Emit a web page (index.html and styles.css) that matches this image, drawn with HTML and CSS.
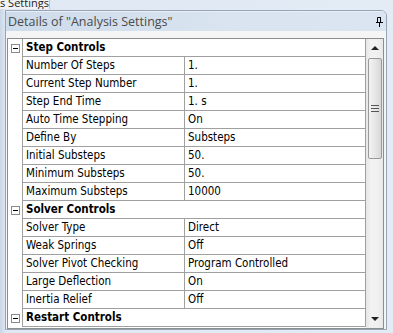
FILE: index.html
```html
<!DOCTYPE html>
<html>
<head>
	<meta charset="utf-8">
	<title>Details of "Analysis Settings"</title>
	<link rel="stylesheet" href="styles.css">
</head>
<body>
<div class="backdrop">
	<div class="tab">s Settings</div>
</div>
<div class="panel">
	<div class="titlebar">
		<span class="title">Details of "Analysis Settings"</span>
		<svg class="pin" width="7" height="10" viewBox="0 0 7 10">
			<path d="M1.5 0.5h3v5M1.5 0.5v5M0 5.5h7M3.5 5.5v4.5" fill="none" stroke="#000" stroke-width="1"/>
			<path d="M4.5 0v5.5" stroke="#000" stroke-width="1"/>
		</svg>
	</div>
	<div class="strip"></div>
	<div class="details">
		<div class="rows">
			<div class="row group"><div class="gut"><span class="toggle"></span></div><div class="cat">Step Controls</div></div>
			<div class="row"><div class="gut"></div><div class="name">Number Of Steps</div><div class="val">1.</div></div>
			<div class="row"><div class="gut"></div><div class="name">Current Step Number</div><div class="val">1.</div></div>
			<div class="row"><div class="gut"></div><div class="name">Step End Time</div><div class="val">1. s</div></div>
			<div class="row"><div class="gut"></div><div class="name">Auto Time Stepping</div><div class="val">On</div></div>
			<div class="row"><div class="gut"></div><div class="name">Define By</div><div class="val">Substeps</div></div>
			<div class="row"><div class="gut"></div><div class="name">Initial Substeps</div><div class="val">50.</div></div>
			<div class="row"><div class="gut"></div><div class="name">Minimum Substeps</div><div class="val">50.</div></div>
			<div class="row"><div class="gut"></div><div class="name">Maximum Substeps</div><div class="val">10000</div></div>
			<div class="row group"><div class="gut"><span class="toggle"></span></div><div class="cat">Solver Controls</div></div>
			<div class="row"><div class="gut"></div><div class="name">Solver Type</div><div class="val">Direct</div></div>
			<div class="row"><div class="gut"></div><div class="name">Weak Springs</div><div class="val">Off</div></div>
			<div class="row"><div class="gut"></div><div class="name">Solver Pivot Checking</div><div class="val">Program Controlled</div></div>
			<div class="row"><div class="gut"></div><div class="name">Large Deflection</div><div class="val">On</div></div>
			<div class="row"><div class="gut"></div><div class="name">Inertia Relief</div><div class="val">Off</div></div>
			<div class="row group"><div class="gut"><span class="toggle"></span></div><div class="cat">Restart Controls</div></div>
		</div>
		<div class="scrollbar">
			<div class="sbtn"><span class="arrow-up"></span></div>
			<div class="thumb"><span class="grip"></span></div>
			<div class="track"></div>
			<div class="sbtn"><span class="arrow-down"></span></div>
		</div>
	</div>
</div>
</body>
</html>
```

FILE: styles.css
```css
* {
	margin: 0;
	padding: 0;
	box-sizing: border-box;
}
body {
	width: 393px;
	height: 333px;
	overflow: hidden;
	background: linear-gradient(to right, #c9d6e6 0, #dfe8f3 6px, #e3ebf5 100%);
	font-family: "DejaVu Sans Condensed", "DejaVu Sans", sans-serif;
	font-size: 11.5px;
	color: #000;
}
.backdrop {
	height: 10px;
	overflow: hidden;
}
.tab {
	width: 50px;
	background: #f2f2f2;
	border-right: 1px solid #b8c2cf;
	font-family: "Open Sans", sans-serif;
	font-size: 11px;
	line-height: 12px;
	white-space: nowrap;
	overflow: hidden;
	margin-top: -3px;
	height: 12px;
	color: #222;
}
.panel {
	margin-left: 5px;
	width: 382px;
	height: 320px;
	border: 1px solid #97a4b5;
	border-top-right-radius: 6px;
	background: #f4f4f4;
	overflow: hidden;
}
.titlebar {
	height: 20px;
	display: flex;
	align-items: center;
	justify-content: space-between;
	padding: 0 3px 0 2px;
	background: linear-gradient(to right, #cedbea, #d9e4f0 60%, #dbe5f1);
	border-top: 1px solid #e8eef6;
}
.title {
	font-family: "Open Sans", sans-serif;
	font-size: 12.5px;
	color: #4a4a4a;
}
.pin {
	display: block;
}
.strip {
	height: 7px;
	background: #f5f5f5;
}
.details {
	margin-left: 1px;
	width: 377px;
	display: flex;
	border: 1px solid #8d8d8d;
	background: #fff;
	height: 291px;
}
.rows {
	width: 358px;
	overflow: hidden;
}
.row {
	display: grid;
	grid-template-columns: 14px 162px 182px;
	height: 18px;
}
.gut {
	display: flex;
	align-items: center;
	justify-content: center;
	padding-left: 1px;
}
.toggle {
	position: relative;
	width: 9px;
	height: 9px;
	border: 1px solid #8a8a8a;
	background: #fff;
}
.toggle::after {
	content: "";
	position: absolute;
	left: 1px;
	top: 3px;
	width: 5px;
	height: 1px;
	background: #000;
}
.name,
.val,
.cat {
	border-left: 1px solid #a0a0a0;
	border-bottom: 1px solid #a0a0a0;
	padding-left: 3px;
	line-height: 17px;
	white-space: nowrap;
	overflow: hidden;
}
.val {
	border-right: 1px solid #a0a0a0;
}
.cat {
	grid-column: span 2;
	border-right: 1px solid #a0a0a0;
	font-weight: bold;
}
.scrollbar {
	width: 17px;
	display: flex;
	flex-direction: column;
	background: linear-gradient(to right, #e6e6e6, #f2f2f2 30%, #f0f0f0 70%, #e8e8e8);
}
.sbtn {
	height: 18px;
	display: flex;
	align-items: center;
	justify-content: center;
}
.arrow-up {
	border-left: 4px solid transparent;
	border-right: 4px solid transparent;
	border-bottom: 4px solid #222;
}
.arrow-down {
	border-left: 4px solid transparent;
	border-right: 4px solid transparent;
	border-top: 4px solid #222;
}
.thumb {
	margin: 1px 1px 0 2px;
	height: 101px;
	border: 1px solid #9a9a9a;
	border-radius: 2px;
	background: linear-gradient(to right, #f3f3f3, #e7e7e7 50%, #d6d6d6);
	display: flex;
	align-items: center;
	justify-content: center;
}
.grip {
	width: 8px;
	height: 7px;
	border-top: 1px solid #555;
	border-bottom: 1px solid #555;
	background: linear-gradient(#555, #555) center / 8px 1px no-repeat;
}
.track {
	flex: 1;
}
```
